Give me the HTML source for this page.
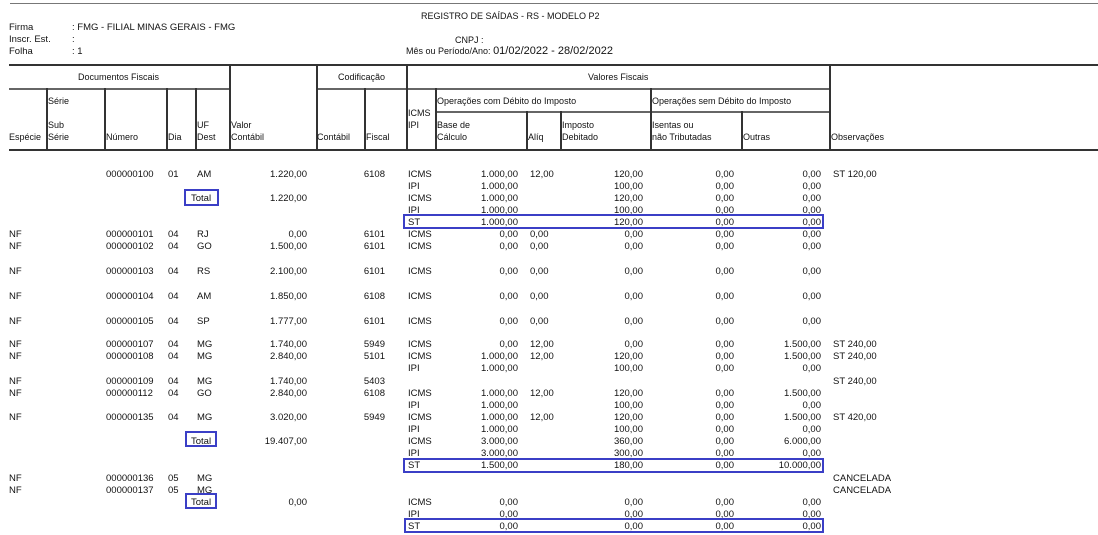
<!DOCTYPE html>
<html><head><meta charset="utf-8"><style>
*{margin:0;padding:0;box-sizing:border-box}
body{width:1098px;height:535px;background:#fff;position:relative;overflow:hidden;font-family:"Liberation Sans",sans-serif;font-size:9.5px;color:#111}
.a{position:absolute;white-space:nowrap;line-height:12px}
.h{position:absolute;background:#333;height:1.5px}
.vl{position:absolute;background:#333;width:1.5px}
.r{position:absolute;left:0;width:1098px;height:12px;margin-top:2px}
.r span{position:absolute;line-height:12px;white-space:nowrap}
.e{left:9px}.n{left:106px}.d{left:168px}.u{left:197px}
.v{left:230px;width:77px;text-align:right}
.f{left:340px;width:45px;text-align:right}
.t{left:408px}
.b{left:436px;width:82px;text-align:right}
.q{left:530px}
.i{left:560px;width:83px;text-align:right}
.s{left:651px;width:83px;text-align:right}
.o{left:742px;width:79px;text-align:right}
.ob{left:833px}
.bx{position:absolute;border:2.5px solid #3b3fc6}
</style></head><body>
<div class="h" style="left:10px;top:3px;width:1088px;background:#777;height:1px"></div>
<div class="a" style="left:9px;top:22px">Firma</div><div class="a" style="left:72px;top:22px">: FMG - FILIAL MINAS GERAIS - FMG</div>
<div class="a" style="left:9px;top:34px">Inscr. Est.</div><div class="a" style="left:72px;top:34px">:</div>
<div class="a" style="left:9px;top:46px">Folha</div><div class="a" style="left:72px;top:46px">: 1</div>
<div class="a" style="left:421px;top:10px;font-size:9px">REGISTRO DE SAÍDAS - RS - MODELO P2</div>
<div class="a" style="left:455px;top:34px;font-size:9px">CNPJ :</div>
<div class="a" style="left:406px;top:45px;font-size:9px">Mês ou Período/Ano: <span style="font-size:11px">01/02/2022 - 28/02/2022</span></div>

<div class="h" style="left:9px;top:64px;width:1089px"></div>
<div class="h" style="left:9px;top:88px;width:220px;background:#666"></div>
<div class="h" style="left:316px;top:88px;width:513px;background:#666"></div>
<div class="h" style="left:435px;top:111px;width:394px;background:#666"></div>
<div class="h" style="left:9px;top:149px;width:1089px"></div>
<div class="vl" style="left:229px;top:64px;height:86px"></div>
<div class="vl" style="left:316px;top:64px;height:86px"></div>
<div class="vl" style="left:406px;top:64px;height:86px"></div>
<div class="vl" style="left:829px;top:64px;height:86px"></div>
<div class="vl" style="left:46px;top:88px;height:62px"></div>
<div class="vl" style="left:104px;top:88px;height:62px"></div>
<div class="vl" style="left:166px;top:88px;height:62px"></div>
<div class="vl" style="left:195px;top:88px;height:62px"></div>
<div class="vl" style="left:364px;top:88px;height:62px"></div>
<div class="vl" style="left:435px;top:88px;height:62px"></div>
<div class="vl" style="left:650px;top:88px;height:62px"></div>
<div class="vl" style="left:526px;top:111px;height:39px"></div>
<div class="vl" style="left:560px;top:111px;height:39px"></div>
<div class="vl" style="left:741px;top:111px;height:39px"></div>

<div class="a" style="left:78px;top:71px;font-size:9px">Documentos Fiscais</div>
<div class="a" style="left:338px;top:71px;font-size:9px">Codificação</div>
<div class="a" style="left:588px;top:71px;font-size:9px">Valores Fiscais</div>
<div class="a" style="left:48px;top:95px;font-size:9px">Série</div>
<div class="a" style="left:48px;top:119px;font-size:9px">Sub</div>
<div class="a" style="left:48px;top:131px;font-size:9px">Série</div>
<div class="a" style="left:9px;top:131px;font-size:9px">Espécie</div>
<div class="a" style="left:106px;top:131px;font-size:9px">Número</div>
<div class="a" style="left:168px;top:131px;font-size:9px">Dia</div>
<div class="a" style="left:197px;top:119px;font-size:9px">UF</div>
<div class="a" style="left:197px;top:131px;font-size:9px">Dest</div>
<div class="a" style="left:231px;top:119px;font-size:9px">Valor</div>
<div class="a" style="left:231px;top:131px;font-size:9px">Contábil</div>
<div class="a" style="left:317px;top:131px;font-size:9px">Contábil</div>
<div class="a" style="left:366px;top:131px;font-size:9px">Fiscal</div>
<div class="a" style="left:408px;top:107px;font-size:9px">ICMS</div>
<div class="a" style="left:408px;top:119px;font-size:9px">IPI</div>
<div class="a" style="left:437px;top:95px;font-size:9px">Operações com Débito do Imposto</div>
<div class="a" style="left:652px;top:95px;font-size:9px">Operações sem Débito do Imposto</div>
<div class="a" style="left:437px;top:119px;font-size:9px">Base de</div>
<div class="a" style="left:437px;top:131px;font-size:9px">Cálculo</div>
<div class="a" style="left:528px;top:131px;font-size:9px">Alíq</div>
<div class="a" style="left:562px;top:119px;font-size:9px">Imposto</div>
<div class="a" style="left:562px;top:131px;font-size:9px">Debitado</div>
<div class="a" style="left:652px;top:119px;font-size:9px">Isentas ou</div>
<div class="a" style="left:652px;top:131px;font-size:9px">não Tributadas</div>
<div class="a" style="left:743px;top:131px;font-size:9px">Outras</div>
<div class="a" style="left:831px;top:131px;font-size:9px">Observações</div>

<div class="r" style="top:167px"><span class="n">000000100</span><span class="d">01</span><span class="u">AM</span><span class="v">1.220,00</span><span class="f">6108</span><span class="t">ICMS</span><span class="b">1.000,00</span><span class="q">12,00</span><span class="i">120,00</span><span class="s">0,00</span><span class="o">0,00</span><span class="ob">ST 120,00</span></div>
<div class="r" style="top:179px"><span class="t">IPI</span><span class="b">1.000,00</span><span class="i">100,00</span><span class="s">0,00</span><span class="o">0,00</span></div>
<div class="r" style="top:191px"><span style="left:191px">Total</span><span class="v">1.220,00</span><span class="t">ICMS</span><span class="b">1.000,00</span><span class="i">120,00</span><span class="s">0,00</span><span class="o">0,00</span></div>
<div class="r" style="top:203px"><span class="t">IPI</span><span class="b">1.000,00</span><span class="i">100,00</span><span class="s">0,00</span><span class="o">0,00</span></div>
<div class="r" style="top:215px"><span class="t">ST</span><span class="b">1.000,00</span><span class="i">120,00</span><span class="s">0,00</span><span class="o">0,00</span></div>
<div class="r" style="top:227px"><span class="e">NF</span><span class="n">000000101</span><span class="d">04</span><span class="u">RJ</span><span class="v">0,00</span><span class="f">6101</span><span class="t">ICMS</span><span class="b">0,00</span><span class="q">0,00</span><span class="i">0,00</span><span class="s">0,00</span><span class="o">0,00</span></div>
<div class="r" style="top:239px"><span class="e">NF</span><span class="n">000000102</span><span class="d">04</span><span class="u">GO</span><span class="v">1.500,00</span><span class="f">6101</span><span class="t">ICMS</span><span class="b">0,00</span><span class="q">0,00</span><span class="i">0,00</span><span class="s">0,00</span><span class="o">0,00</span></div>
<div class="r" style="top:264px"><span class="e">NF</span><span class="n">000000103</span><span class="d">04</span><span class="u">RS</span><span class="v">2.100,00</span><span class="f">6101</span><span class="t">ICMS</span><span class="b">0,00</span><span class="q">0,00</span><span class="i">0,00</span><span class="s">0,00</span><span class="o">0,00</span></div>
<div class="r" style="top:289px"><span class="e">NF</span><span class="n">000000104</span><span class="d">04</span><span class="u">AM</span><span class="v">1.850,00</span><span class="f">6108</span><span class="t">ICMS</span><span class="b">0,00</span><span class="q">0,00</span><span class="i">0,00</span><span class="s">0,00</span><span class="o">0,00</span></div>
<div class="r" style="top:314px"><span class="e">NF</span><span class="n">000000105</span><span class="d">04</span><span class="u">SP</span><span class="v">1.777,00</span><span class="f">6101</span><span class="t">ICMS</span><span class="b">0,00</span><span class="q">0,00</span><span class="i">0,00</span><span class="s">0,00</span><span class="o">0,00</span></div>
<div class="r" style="top:337px"><span class="e">NF</span><span class="n">000000107</span><span class="d">04</span><span class="u">MG</span><span class="v">1.740,00</span><span class="f">5949</span><span class="t">ICMS</span><span class="b">0,00</span><span class="q">12,00</span><span class="i">0,00</span><span class="s">0,00</span><span class="o">1.500,00</span><span class="ob">ST 240,00</span></div>
<div class="r" style="top:349px"><span class="e">NF</span><span class="n">000000108</span><span class="d">04</span><span class="u">MG</span><span class="v">2.840,00</span><span class="f">5101</span><span class="t">ICMS</span><span class="b">1.000,00</span><span class="q">12,00</span><span class="i">120,00</span><span class="s">0,00</span><span class="o">1.500,00</span><span class="ob">ST 240,00</span></div>
<div class="r" style="top:361px"><span class="t">IPI</span><span class="b">1.000,00</span><span class="i">100,00</span><span class="s">0,00</span><span class="o">0,00</span></div>
<div class="r" style="top:374px"><span class="e">NF</span><span class="n">000000109</span><span class="d">04</span><span class="u">MG</span><span class="v">1.740,00</span><span class="f">5403</span><span class="ob">ST 240,00</span></div>
<div class="r" style="top:386px"><span class="e">NF</span><span class="n">000000112</span><span class="d">04</span><span class="u">GO</span><span class="v">2.840,00</span><span class="f">6108</span><span class="t">ICMS</span><span class="b">1.000,00</span><span class="q">12,00</span><span class="i">120,00</span><span class="s">0,00</span><span class="o">1.500,00</span></div>
<div class="r" style="top:398px"><span class="t">IPI</span><span class="b">1.000,00</span><span class="i">100,00</span><span class="s">0,00</span><span class="o">0,00</span></div>
<div class="r" style="top:410px"><span class="e">NF</span><span class="n">000000135</span><span class="d">04</span><span class="u">MG</span><span class="v">3.020,00</span><span class="f">5949</span><span class="t">ICMS</span><span class="b">1.000,00</span><span class="q">12,00</span><span class="i">120,00</span><span class="s">0,00</span><span class="o">1.500,00</span><span class="ob">ST 420,00</span></div>
<div class="r" style="top:422px"><span class="t">IPI</span><span class="b">1.000,00</span><span class="i">100,00</span><span class="s">0,00</span><span class="o">0,00</span></div>
<div class="r" style="top:434px"><span style="left:191px">Total</span><span class="v">19.407,00</span><span class="t">ICMS</span><span class="b">3.000,00</span><span class="i">360,00</span><span class="s">0,00</span><span class="o">6.000,00</span></div>
<div class="r" style="top:446px"><span class="t">IPI</span><span class="b">3.000,00</span><span class="i">300,00</span><span class="s">0,00</span><span class="o">0,00</span></div>
<div class="r" style="top:458px"><span class="t">ST</span><span class="b">1.500,00</span><span class="i">180,00</span><span class="s">0,00</span><span class="o">10.000,00</span></div>
<div class="r" style="top:471px"><span class="e">NF</span><span class="n">000000136</span><span class="d">05</span><span class="u">MG</span><span class="ob">CANCELADA</span></div>
<div class="r" style="top:483px"><span class="e">NF</span><span class="n">000000137</span><span class="d">05</span><span class="u">MG</span><span class="ob">CANCELADA</span></div>
<div class="r" style="top:495px"><span style="left:191px">Total</span><span class="v">0,00</span><span class="t">ICMS</span><span class="b">0,00</span><span class="i">0,00</span><span class="s">0,00</span><span class="o">0,00</span></div>
<div class="r" style="top:507px"><span class="t">IPI</span><span class="b">0,00</span><span class="i">0,00</span><span class="s">0,00</span><span class="o">0,00</span></div>
<div class="r" style="top:519px"><span class="t">ST</span><span class="b">0,00</span><span class="i">0,00</span><span class="s">0,00</span><span class="o">0,00</span></div>

<div class="bx" style="left:184px;top:189px;width:35px;height:17px"></div>
<div class="bx" style="left:403px;top:214px;width:421px;height:15px"></div>
<div class="bx" style="left:185px;top:431px;width:32px;height:16px"></div>
<div class="bx" style="left:403px;top:458px;width:421px;height:15px"></div>
<div class="bx" style="left:185px;top:493px;width:32px;height:16px"></div>
<div class="bx" style="left:404px;top:518px;width:420px;height:15px"></div>
</body></html>
